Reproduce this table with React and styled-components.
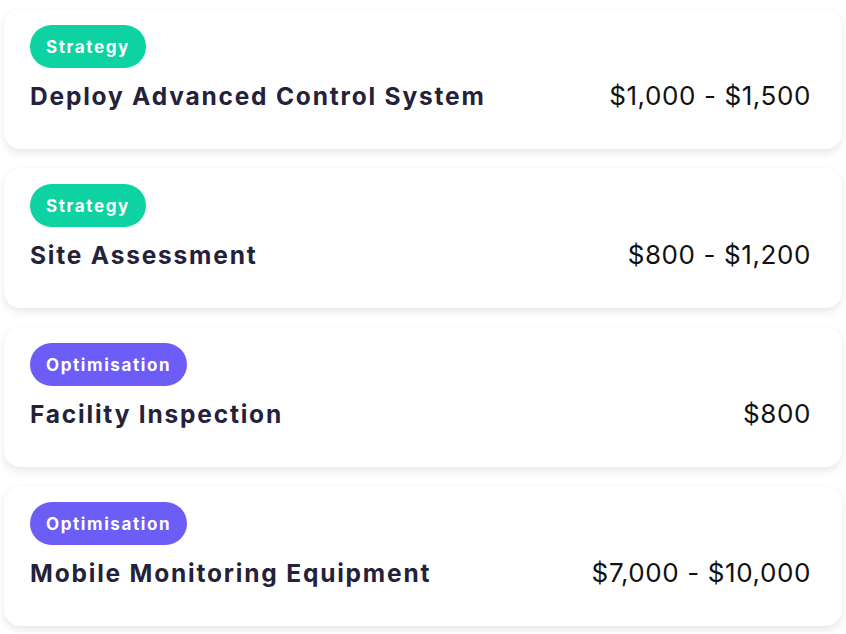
import styled, { createGlobalStyle } from "styled-components";

const GlobalStyle = createGlobalStyle`
  body {
    margin: 0;
    background: #ffffff;
    font-family: Inter, "Liberation Sans", sans-serif;
  }
`;

const services = [
  { tag: "Strategy", kind: "strategy", title: "Deploy Advanced Control System", price: "$1,000 - $1,500" },
  { tag: "Strategy", kind: "strategy", title: "Site Assessment", price: "$800 - $1,200" },
  { tag: "Optimisation", kind: "optimisation", title: "Facility Inspection", price: "$800" },
  { tag: "Optimisation", kind: "optimisation", title: "Mobile Monitoring Equipment", price: "$7,000 - $10,000" },
];

const tagColors = {
  strategy: "#0cd3a1",
  optimisation: "#6c5df6",
};

const App = () => (
  <>
    <GlobalStyle />
    <List>
      {services.map((item) => (
        <Card key={item.title}>
          <Tag kind={item.kind}>{item.tag}</Tag>
          <Row>
            <Title>{item.title}</Title>
            <Price>{item.price}</Price>
          </Row>
        </Card>
      ))}
    </List>
  </>
);

export default App;

const List = styled.div`
  display: flex;
  flex-direction: column;
  gap: 19px;
  padding: 9px 4px;
`;

const Card = styled.div`
  height: 140px;
  box-sizing: border-box;
  display: flex;
  flex-direction: column;
  align-items: flex-start;
  padding: 16px 31px 0 26px;
  background: #ffffff;
  border-radius: 16px;
  box-shadow: 0 4px 8px rgba(0, 0, 0, 0.09), 0 0 1px rgba(0, 0, 0, 0.06);
`;

const Tag = styled.span`
  display: inline-flex;
  align-items: center;
  height: 43px;
  padding: 0 16px;
  border-radius: 22px;
  background: ${(p) => tagColors[p.kind]};
  color: #ffffff;
  font-size: 17px;
  font-weight: 700;
  letter-spacing: 1.6px;
`;

const Row = styled.div`
  align-self: stretch;
  display: flex;
  justify-content: space-between;
  align-items: center;
  margin-top: 12px;
`;

const Title = styled.div`
  color: #24223a;
  font-size: 24.5px;
  font-weight: 700;
  letter-spacing: 1.8px;
`;

const Price = styled.div`
  color: #111111;
  font-size: 26px;
  font-weight: 400;
  letter-spacing: 0.6px;
`;
